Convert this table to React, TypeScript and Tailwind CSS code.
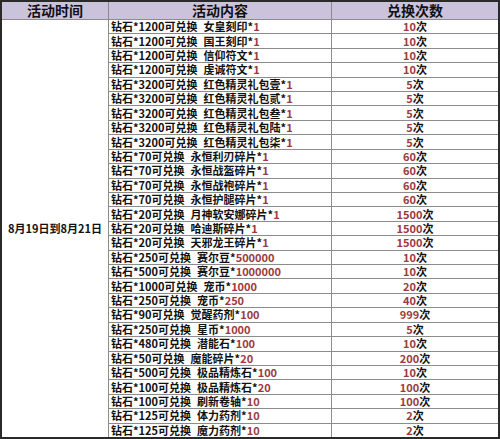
const rows: Array<[string, string, string, string]> = [
  ['1200', '女皇刻印', '1', '10'],
  ['1200', '国王刻印', '1', '10'],
  ['1200', '信仰符文', '1', '10'],
  ['1200', '虔诚符文', '1', '10'],
  ['3200', '红色精灵礼包壹', '1', '5'],
  ['3200', '红色精灵礼包贰', '1', '5'],
  ['3200', '红色精灵礼包叁', '1', '5'],
  ['3200', '红色精灵礼包陆', '1', '5'],
  ['3200', '红色精灵礼包柒', '1', '5'],
  ['70', '永恒利刃碎片', '1', '60'],
  ['70', '永恒战盔碎片', '1', '60'],
  ['70', '永恒战袍碎片', '1', '60'],
  ['70', '永恒护腿碎片', '1', '60'],
  ['20', '月神软安娜碎片', '1', '1500'],
  ['20', '哈迪斯碎片', '1', '1500'],
  ['20', '天邪龙王碎片', '1', '1500'],
  ['250', '赛尔豆', '500000', '10'],
  ['500', '赛尔豆', '1000000', '10'],
  ['1000', '宠币', '1000', '20'],
  ['250', '宠币', '250', '40'],
  ['90', '觉醒药剂', '100', '999'],
  ['250', '星币', '1000', '5'],
  ['480', '潜能石', '100', '10'],
  ['50', '魔能碎片', '20', '200'],
  ['500', '极品精炼石', '100', '10'],
  ['100', '极品精炼石', '20', '100'],
  ['100', '刷新卷轴', '10', '100'],
  ['125', '体力药剂', '10', '2'],
  ['125', '魔力药剂', '10', '2'],
];

export default function App() {
  return (
    <div
      className="w-[500px] h-[439px] bg-white text-[#111]"
      style={{ fontFamily: '"Noto Sans CJK SC", "Noto Sans", sans-serif' }}
    >
      <div className="grid h-full grid-cols-[106px_222px_1fr] grid-rows-[17px_repeat(29,minmax(0,1fr))] gap-px border-2 border-[#2a2a2a] bg-[#8c8c8c]">
        <div className="flex items-center justify-center bg-[#cbc2dc] text-[14px] font-bold leading-[17px]">活动时间</div>
        <div className="flex items-center justify-center bg-[#cbc2dc] text-[14px] font-bold leading-[17px]">活动内容</div>
        <div className="flex items-center justify-center bg-[#cbc2dc] text-[14px] font-bold leading-[17px]">兑换次数</div>

        <div className="row-span-29 flex items-center justify-center bg-white text-[11px] font-bold leading-[13px]">
          8月19日到8月21日
        </div>

        {rows.map(([cost, item, qty, times], i) => (
          <div key={`c${i}`} className="contents">
            <div className="flex items-center bg-white pl-[2px] text-[11px] font-bold leading-[13px] whitespace-nowrap">
              <span>钻石*{cost}可兑换</span>
              <span className="ml-[6px]">{item}*</span>
              <span className="text-[#9b3a40]">{qty}</span>
            </div>
            <div className="flex items-center justify-center bg-white text-[11px] font-bold leading-[13px]">
              <span className="text-[#9b3a40]">{times}</span>
              <span>次</span>
            </div>
          </div>
        ))}
      </div>
    </div>
  );
}
